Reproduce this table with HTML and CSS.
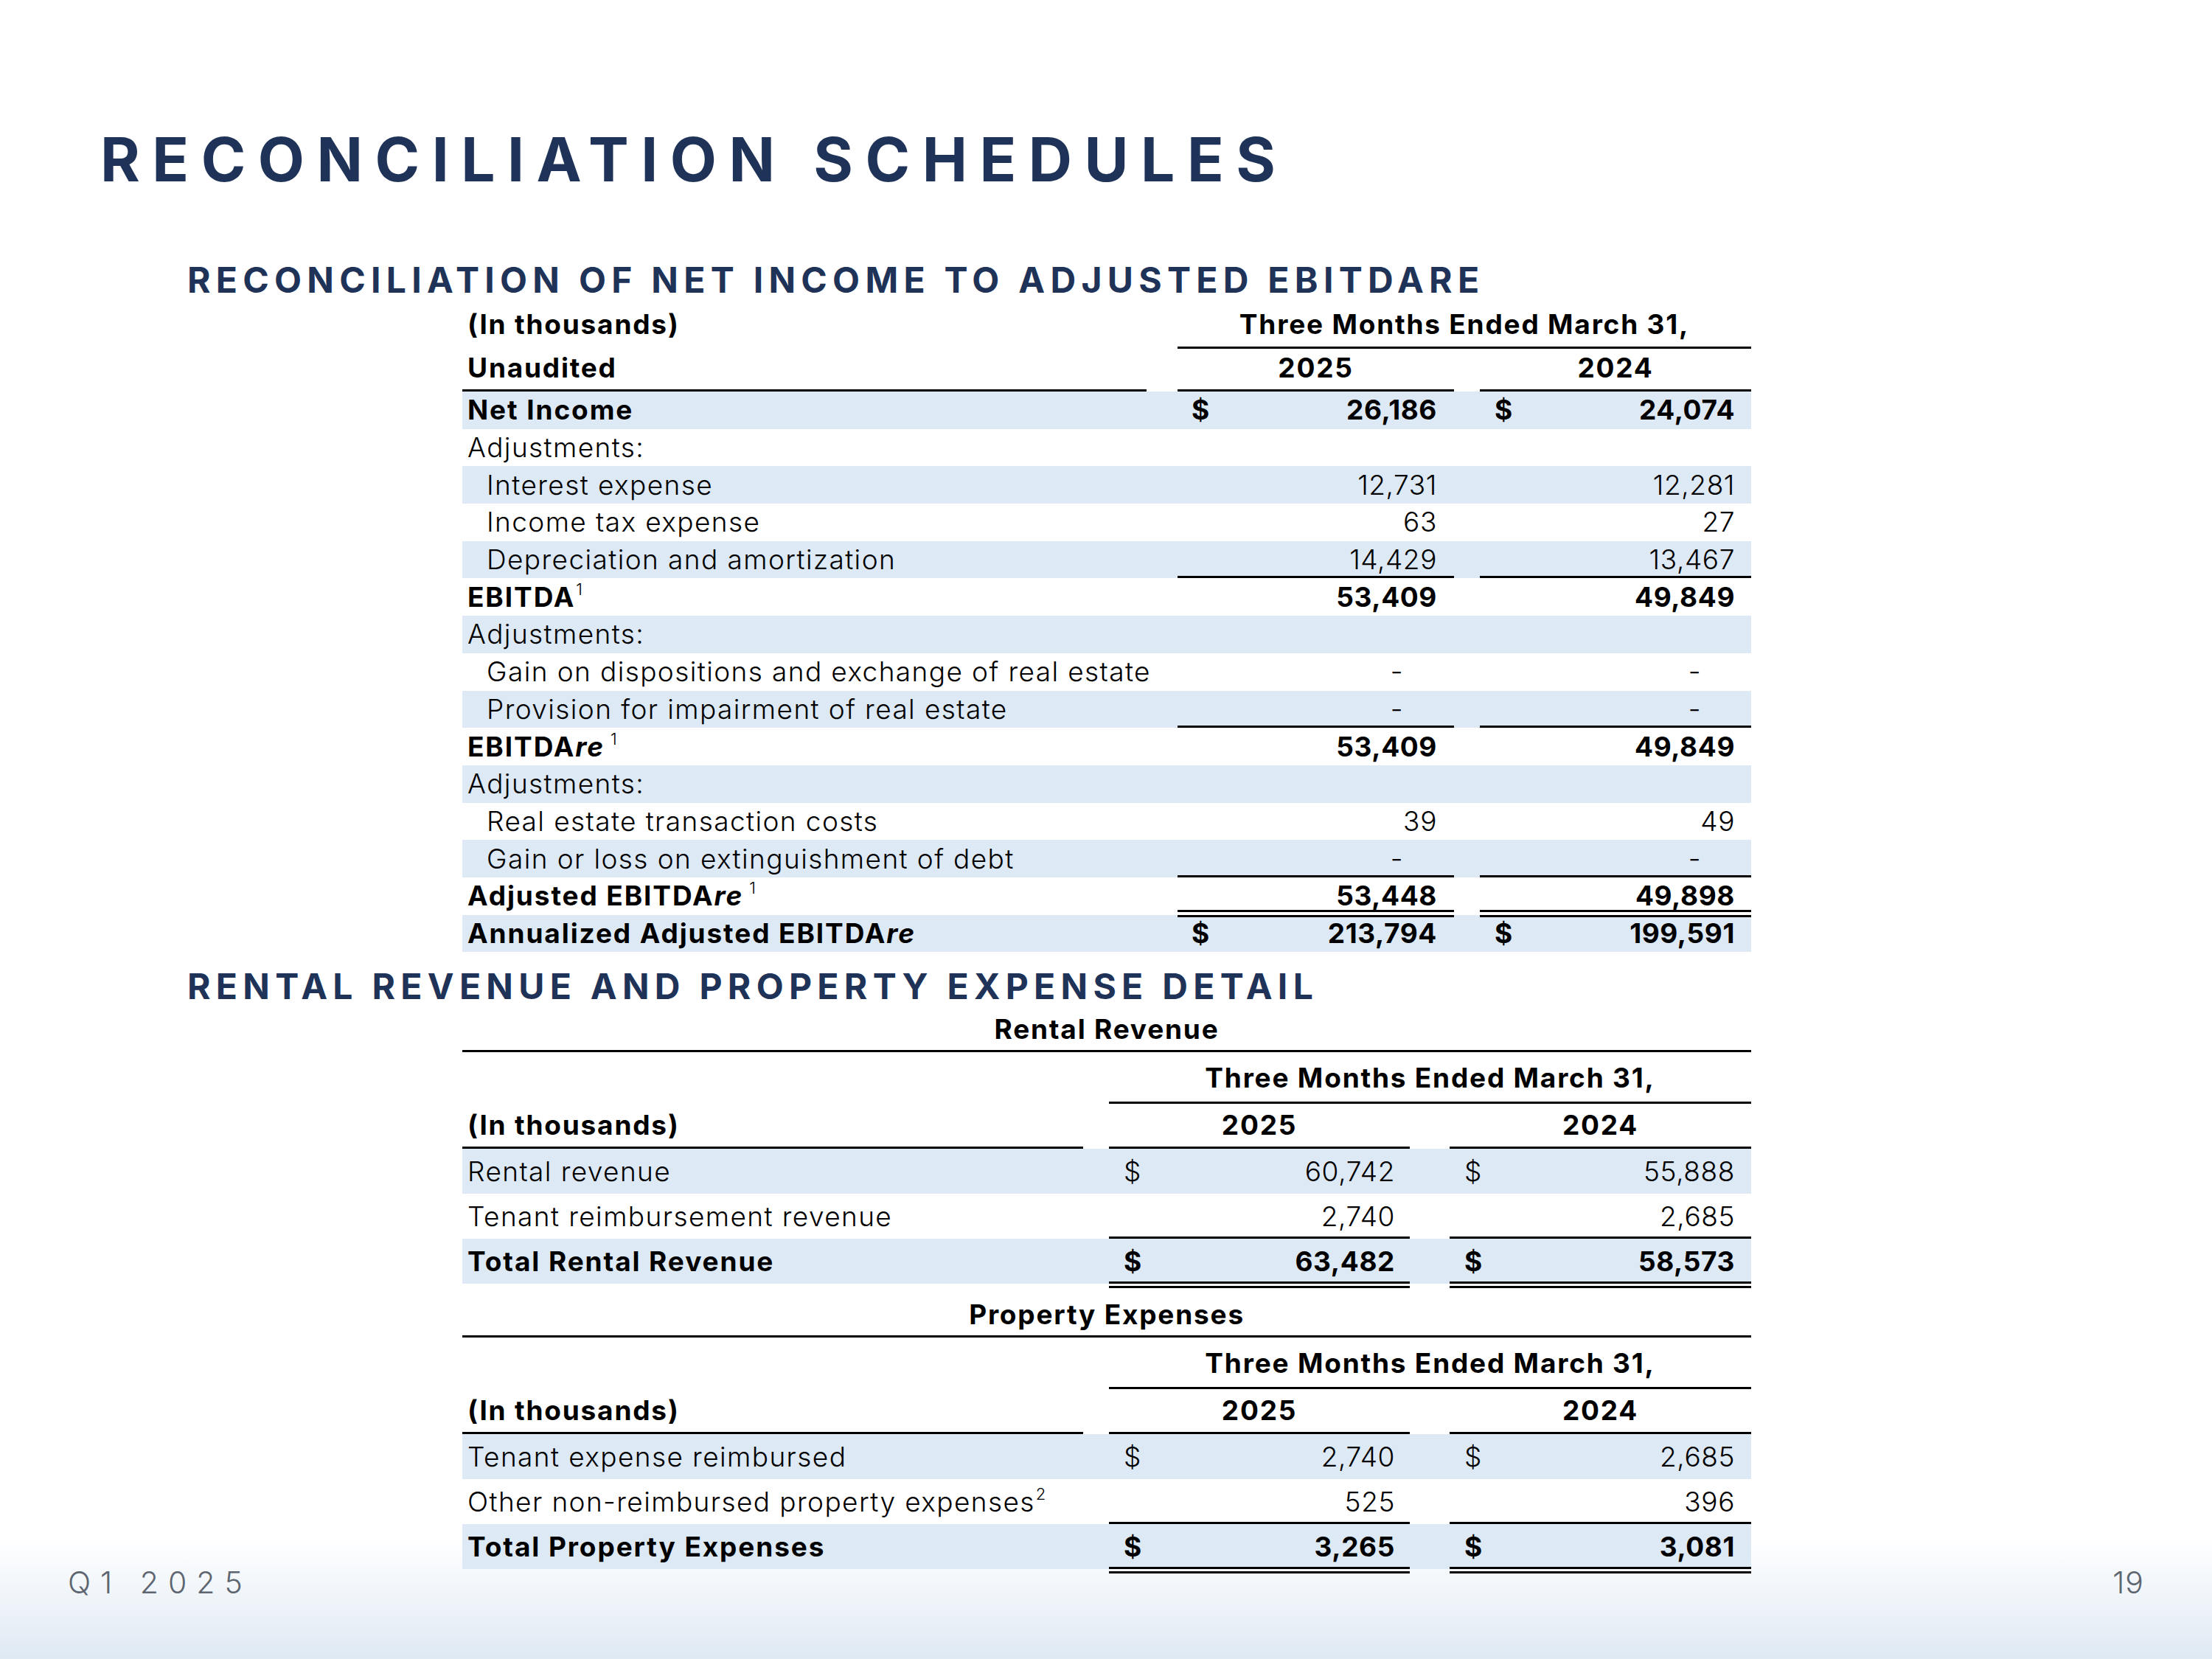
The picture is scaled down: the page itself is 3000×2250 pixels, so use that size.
FILE: index.html
```html
<!DOCTYPE html>
<html>
<head>
<meta charset="utf-8">
<title>Reconciliation Schedules</title>
<link rel="stylesheet" href="styles.css">
</head>
<body>
<div class="slide">
  <h1 class="title">RECONCILIATION SCHEDULES</h1>
  <h2 class="section first">RECONCILIATION OF NET INCOME TO ADJUSTED EBITDARE</h2>
  <table class="fin t1">
    <colgroup><col class="w-label"><col class="w-gap1"><col class="w-n1"><col class="w-gap2"><col class="w-n2"></colgroup>
    <tr class="hdA"><th class="lbl">(In thousands)</th><th></th><th colspan="3" class="ctr ul">Three Months Ended March 31,</th></tr>
    <tr class="hdB"><th class="lbl ul">Unaudited</th><th></th><th class="ctr ul">2025</th><th></th><th class="ctr ul">2024</th></tr>
    <tr class="sh bold"><td class="lbl">Net Income</td><td></td><td class="num n1"><span class="cur">$</span>26,186</td><td></td><td class="num n2"><span class="cur">$</span>24,074</td></tr>
    <tr><td class="lbl">Adjustments:</td><td></td><td class="num n1"></td><td></td><td class="num n2"></td></tr>
    <tr class="sh"><td class="lbl ind">Interest expense</td><td></td><td class="num n1">12,731</td><td></td><td class="num n2">12,281</td></tr>
    <tr><td class="lbl ind">Income tax expense</td><td></td><td class="num n1">63</td><td></td><td class="num n2">27</td></tr>
    <tr class="sh"><td class="lbl ind">Depreciation and amortization</td><td></td><td class="num n1 ul">14,429</td><td></td><td class="num n2 ul">13,467</td></tr>
    <tr class="bold"><td class="lbl">EBITDA<sup>1</sup></td><td></td><td class="num n1">53,409</td><td></td><td class="num n2">49,849</td></tr>
    <tr class="sh"><td class="lbl">Adjustments:</td><td></td><td class="num n1"></td><td></td><td class="num n2"></td></tr>
    <tr><td class="lbl ind">Gain on dispositions and exchange of real estate</td><td></td><td class="num n1"><span class="dash">-</span></td><td></td><td class="num n2"><span class="dash">-</span></td></tr>
    <tr class="sh"><td class="lbl ind">Provision for impairment of real estate</td><td></td><td class="num n1 ul"><span class="dash">-</span></td><td></td><td class="num n2 ul"><span class="dash">-</span></td></tr>
    <tr class="bold"><td class="lbl">EBITDA<i>re</i><sup class="gap">1</sup></td><td></td><td class="num n1">53,409</td><td></td><td class="num n2">49,849</td></tr>
    <tr class="sh"><td class="lbl">Adjustments:</td><td></td><td class="num n1"></td><td></td><td class="num n2"></td></tr>
    <tr><td class="lbl ind">Real estate transaction costs</td><td></td><td class="num n1">39</td><td></td><td class="num n2">49</td></tr>
    <tr class="sh"><td class="lbl ind">Gain or loss on extinguishment of debt</td><td></td><td class="num n1 ul"><span class="dash">-</span></td><td></td><td class="num n2 ul"><span class="dash">-</span></td></tr>
    <tr class="bold"><td class="lbl">Adjusted EBITDA<i>re</i><sup class="gap">1</sup></td><td></td><td class="num n1 dbl-top">53,448</td><td></td><td class="num n2 dbl-top">49,898</td></tr>
    <tr class="sh bold"><td class="lbl">Annualized Adjusted EBITDA<i>re</i></td><td></td><td class="num n1 dbl-bot"><span class="cur">$</span>213,794</td><td></td><td class="num n2 dbl-bot"><span class="cur">$</span>199,591</td></tr>
  </table>

  <h2 class="section second">RENTAL REVENUE AND PROPERTY EXPENSE DETAIL</h2>

  <table class="fin t2">
    <colgroup><col class="w-label"><col class="w-gap1"><col class="w-n1"><col class="w-gap2"><col class="w-n2"></colgroup>
    <tr class="cap"><th colspan="5" class="ctr ul">Rental Revenue</th></tr>
    <tr class="hdA"><th class="lbl"></th><th></th><th colspan="3" class="ctr ul">Three Months Ended March 31,</th></tr>
    <tr class="hdB"><th class="lbl ul">(In thousands)</th><th></th><th class="ctr ul">2025</th><th></th><th class="ctr ul">2024</th></tr>
    <tr class="sh"><td class="lbl">Rental revenue</td><td></td><td class="num n1"><span class="cur">$</span>60,742</td><td></td><td class="num n2"><span class="cur">$</span>55,888</td></tr>
    <tr><td class="lbl">Tenant reimbursement revenue</td><td></td><td class="num n1 ul">2,740</td><td></td><td class="num n2 ul">2,685</td></tr>
    <tr class="sh bold"><td class="lbl">Total Rental Revenue</td><td></td><td class="num n1 ul"><span class="cur">$</span>63,482</td><td></td><td class="num n2 ul"><span class="cur">$</span>58,573</td></tr>
    <tr class="tail"><td></td><td></td><td class="ul"></td><td></td><td class="ul"></td></tr>
  </table>

  <table class="fin t2 t3">
    <colgroup><col class="w-label"><col class="w-gap1"><col class="w-n1"><col class="w-gap2"><col class="w-n2"></colgroup>
    <tr class="cap"><th colspan="5" class="ctr ul">Property Expenses</th></tr>
    <tr class="hdA"><th class="lbl"></th><th></th><th colspan="3" class="ctr ul">Three Months Ended March 31,</th></tr>
    <tr class="hdB"><th class="lbl ul">(In thousands)</th><th></th><th class="ctr ul">2025</th><th></th><th class="ctr ul">2024</th></tr>
    <tr class="sh"><td class="lbl">Tenant expense reimbursed</td><td></td><td class="num n1"><span class="cur">$</span>2,740</td><td></td><td class="num n2"><span class="cur">$</span>2,685</td></tr>
    <tr><td class="lbl">Other non-reimbursed property expenses<sup>2</sup></td><td></td><td class="num n1 ul">525</td><td></td><td class="num n2 ul">396</td></tr>
    <tr class="sh bold"><td class="lbl">Total Property Expenses</td><td></td><td class="num n1 ul"><span class="cur">$</span>3,265</td><td></td><td class="num n2 ul"><span class="cur">$</span>3,081</td></tr>
    <tr class="tail"><td></td><td></td><td class="ul"></td><td></td><td class="ul"></td></tr>
  </table>

  <footer class="foot">
    <span class="quarter">Q1 2025</span>
    <span class="page">19</span>
  </footer>
</div>
</body>
</html>
```

FILE: styles.css
```css
html, body {
  margin: 0;
  padding: 0;
  background: #ffffff;
}

.slide {
  position: relative;
  width: 3000px;
  height: 2250px;
  box-sizing: border-box;
  padding-top: 176px;
  overflow: hidden;
  font-family: "Inter", "Lato", "DejaVu Sans", sans-serif;
  color: #000;
  background: linear-gradient(to bottom, #ffffff 0, #ffffff 2085px, #dfe9f3 2250px);
}

.title {
  margin: 0 0 0 136px;
  font-size: 82px;
  line-height: 81px;
  font-weight: 700;
  letter-spacing: 16.5px;
  color: #1f3358;
}

.section {
  margin: 0 0 0 254px;
  font-size: 48px;
  line-height: 47px;
  font-weight: 700;
  letter-spacing: 7.3px;
  color: #1f3358;
}

.section.first {
  margin-top: 99px;
  margin-bottom: 10px;
}

.section.second {
  margin-top: 23px;
  margin-bottom: 7px;
}

.fin {
  margin-left: 627px;
  width: 1748px;
  table-layout: fixed;
  border-collapse: separate;
  border-spacing: 0;
  font-size: 37px;
  line-height: 44px;
  font-weight: 300;
  letter-spacing: 1.4px;
}

.fin th {
  font-weight: 700;
  padding: 0;
  text-align: left;
  vertical-align: middle;
  letter-spacing: 1.8px;
}

.fin td {
  padding: 0;
  vertical-align: middle;
  white-space: nowrap;
}

.t1 .w-label { width: 928px; }
.t1 .w-gap1 { width: 42px; }
.t1 .w-n1 { width: 375px; }
.t1 .w-gap2 { width: 35px; }
.t1 .w-n2 { width: 368px; }

.t2 .w-label { width: 842px; }
.t2 .w-gap1 { width: 35px; }
.t2 .w-n1 { width: 408px; }
.t2 .w-gap2 { width: 54px; }
.t2 .w-n2 { width: 409px; }

.t1 tr { height: 50.7px; }
.t1 tr.hdA { height: 60px; }
.t1 tr.hdB { height: 58px; }
.t1 .hdA th, .t1 .hdB th { padding-bottom: 6px; }

.t2 tr { height: 61px; }
.t2 tr.cap { height: 59px; }
.t2 tr.hdA { height: 70px; }
.t2 tr.hdB { height: 61px; }
.t2 tr.tail { height: 6px; }
.t2 .cap th { padding-bottom: 4px; }
.t2 .hdB th { padding-bottom: 4px; }
.t3 { margin-top: 8px; }

.sh { background: #dde9f5; }
.bold td { font-weight: 700; letter-spacing: 1.9px; }

.lbl { padding-left: 7px !important; }
.lbl.ind { padding-left: 33px !important; }

.ctr { text-align: center !important; }

.ul { box-shadow: inset 0 -3px 0 #000; }

.num { text-align: right; }
.fin td.num { letter-spacing: 0.6px; }
.t1 .n1 { padding: 0 23px 0 19px; }
.t1 .n2 { padding: 0 22px 0 20px; }
.t2 .n1 { padding: 0 20px 0 20px; }
.t2 .n2 { padding: 0 22px 0 20px; }

.cur { float: left; }

.dash { margin-right: 46px; }

.dbl-top { box-shadow: inset 0 -4px 0 #fff, inset 0 -7px 0 #000; }
.dbl-bot { box-shadow: inset 0 3px 0 #000; }

sup {
  font-size: 22px;
  line-height: 0;
  vertical-align: 16px;
  font-weight: 700;
  margin-left: 1px;
}
sup.gap { margin-left: 8px; }
td:not(.bold) sup { font-weight: 300; }

i { font-style: italic; }

.foot {
  position: absolute;
  left: 92px;
  right: 92px;
  bottom: 83px;
  display: flex;
  justify-content: space-between;
  font-size: 41px;
  line-height: 41px;
  font-weight: 300;
  color: #5d6670;
}

.quarter { letter-spacing: 13px; }
.page { letter-spacing: 1px; }
```
